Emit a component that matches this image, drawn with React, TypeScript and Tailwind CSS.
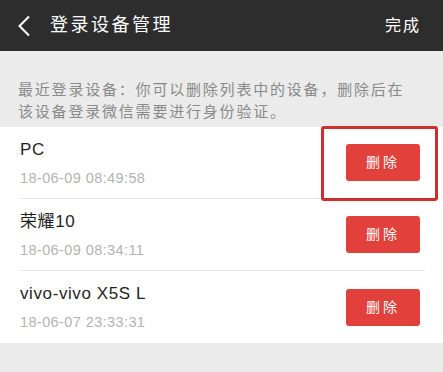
const devices = [
  { name: "PC", time: "18-06-09 08:49:58" },
  { name: "荣耀10", time: "18-06-09 08:34:11" },
  { name: "vivo-vivo X5S L", time: "18-06-07 23:33:31" },
];

const font = { fontFamily: '"Liberation Sans", "Noto Sans CJK SC", sans-serif' };

export default function App() {
  return (
    <div className="flex h-[372px] w-[443px] flex-col overflow-hidden bg-[#ebebeb]" style={font}>
      <div className="flex h-[51px] shrink-0 items-center bg-[#2d2d2d] pl-[17px] pr-[22px] text-white">
        <svg width="14" height="22" viewBox="0 0 14 22" fill="none" className="mr-[19px]">
          <path d="M12 1.5 L2.5 11 L12 20.5" stroke="#fff" strokeWidth="2" />
        </svg>
        <span className="text-[18px] tracking-[2.5px]">登录设备管理</span>
        <span className="ml-auto text-[16px] tracking-[2px]">完成</span>
      </div>

      <div className="h-[76px] shrink-0 whitespace-nowrap px-[18px] pt-[28px] text-[15px] leading-[22px] tracking-[1.8px] text-[#8a8a8a]">
        最近登录设备：你可以删除列表中的设备，删除后在
        <br />
        该设备登录微信需要进行身份验证。
      </div>

      <div className="bg-white">
        {devices.map((d, i) => (
          <div key={d.name} className="relative h-[72px] pl-[20px] pr-[18px]">
            <div
              className={`flex h-full items-center ${i < devices.length - 1 ? "border-b border-[#e6e6e6]" : ""}`}
            >
              <div className="flex flex-col">
                <span className="text-[17px] leading-[20px] tracking-[0.6px] text-[#1f1f1f]">{d.name}</span>
                <span className="mt-[10px] text-[14.5px] leading-[16px] tracking-[0.4px] text-[#b3b3b3]">{d.time}</span>
              </div>
              <button className="ml-auto mr-[5px] h-[37px] w-[74px] rounded-[3px] bg-[#e2403b] text-[14px] tracking-[3px] text-white">
                删除
              </button>
            </div>
            {i === 0 && (
              <div className="absolute left-[321px] top-[-1px] h-[75px] w-[117px] rounded-[3px] border-[3px] border-[#cf2f2c]" />
            )}
          </div>
        ))}
      </div>
    </div>
  );
}
